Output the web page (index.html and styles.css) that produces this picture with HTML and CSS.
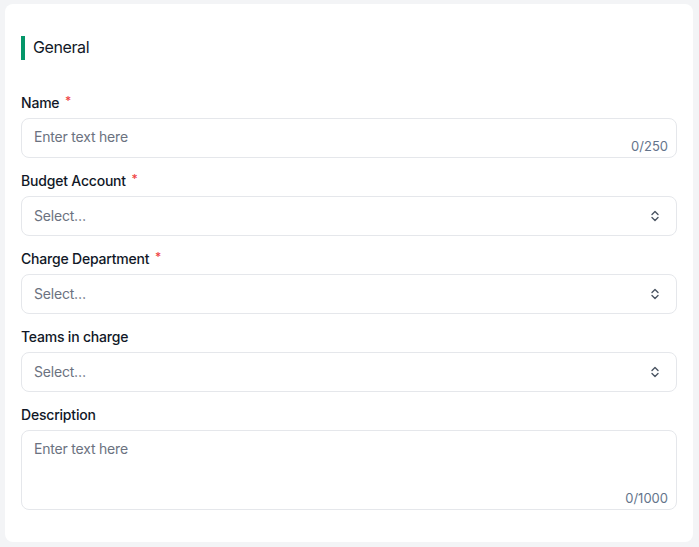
FILE: index.html
```html
<!DOCTYPE html>
<html>
<head>
<meta charset="utf-8">
<link rel="stylesheet" href="styles.css">
</head>
<body>
<div class="card">
  <div class="section-title">General</div>
  <div class="fields">
    <div class="field">
      <div class="label">Name <span class="req">*</span></div>
      <div class="input">
        <span class="ph">Enter text here</span>
        <span class="count">0/250</span>
      </div>
    </div>
    <div class="field">
      <div class="label">Budget Account <span class="req">*</span></div>
      <div class="select">
        <span class="ph">Select…</span>
        <svg class="chev" width="10" height="12" viewBox="0 0 10 12" fill="none" stroke="#4b5563" stroke-width="1.4" stroke-linecap="round" stroke-linejoin="round"><path d="M2 4.5 5 1.5 8 4.5"/><path d="M2 7.5 5 10.5 8 7.5"/></svg>
      </div>
    </div>
    <div class="field">
      <div class="label">Charge Department <span class="req">*</span></div>
      <div class="select">
        <span class="ph">Select…</span>
        <svg class="chev" width="10" height="12" viewBox="0 0 10 12" fill="none" stroke="#4b5563" stroke-width="1.4" stroke-linecap="round" stroke-linejoin="round"><path d="M2 4.5 5 1.5 8 4.5"/><path d="M2 7.5 5 10.5 8 7.5"/></svg>
      </div>
    </div>
    <div class="field">
      <div class="label">Teams in charge</div>
      <div class="select">
        <span class="ph">Select…</span>
        <svg class="chev" width="10" height="12" viewBox="0 0 10 12" fill="none" stroke="#4b5563" stroke-width="1.4" stroke-linecap="round" stroke-linejoin="round"><path d="M2 4.5 5 1.5 8 4.5"/><path d="M2 7.5 5 10.5 8 7.5"/></svg>
      </div>
    </div>
    <div class="field">
      <div class="label">Description</div>
      <div class="textarea">
        <span class="ph">Enter text here</span>
        <span class="count">0/1000</span>
      </div>
    </div>
  </div>
</div>
</body>
</html>
```
FILE: styles.css
```css
html, body {
  margin: 0;
  padding: 0;
}
body {
  background: #f3f4f6;
  font-family: Inter, "Noto Sans", sans-serif;
  color: #111827;
  padding: 4px 6px 5px 5px;
}
.card {
  background: #fff;
  border-radius: 8px;
  padding: 32px 16px 32px 16px;
  height: 538px;
  box-sizing: border-box;
}
.section-title {
  border-left: 4px solid #059669;
  padding-left: 8px;
  font-size: 16px;
  line-height: 23px;
  height: 24px;
  margin-bottom: 33px;
  color: #111827;
  letter-spacing: -0.4px;
}
.fields {
  display: flex;
  flex-direction: column;
  gap: 13px;
}
.field {
  display: flex;
  flex-direction: column;
  gap: 5px;
}
.label {
  font-size: 14px;
  font-weight: 500;
  line-height: 20px;
  color: #111827;
  letter-spacing: -0.2px;
}
.req {
  color: #ef4444;
  margin-left: 2px;
  font-size: 12px;
  vertical-align: top;
  position: relative;
  top: -2px;
}
.input, .select, .textarea {
  border: 1px solid #e5e7eb;
  border-radius: 8px;
  box-sizing: border-box;
  font-size: 14px;
  color: #6b7280;
  position: relative;
  letter-spacing: -0.2px;
}
.input {
  height: 40px;
  padding: 0 12px;
  display: flex;
  align-items: center;
}
.input .ph {
  position: relative;
  top: -1px;
}
.select {
  height: 40px;
  padding: 0 16px 0 12px;
  display: flex;
  align-items: center;
  justify-content: space-between;
}
.textarea {
  height: 80px;
  padding: 8px 12px;
}
.ph {
  line-height: 20px;
}
.count {
  position: absolute;
  right: 8px;
  bottom: 3px;
  font-size: 13px;
  line-height: 16px;
  color: #64748b;
  letter-spacing: 0;
}
.chev {
  display: block;
}
```
